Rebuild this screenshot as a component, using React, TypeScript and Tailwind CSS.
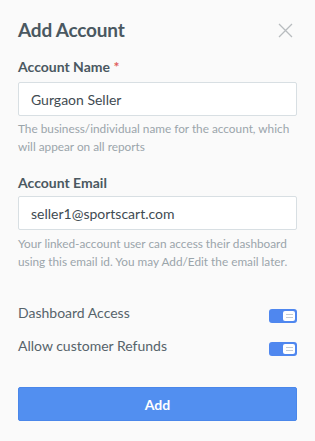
import React from "react";

function Toggle() {
  return (
    <div className="w-[28px] h-[14px] rounded-[3px] bg-[#4f87ef] flex items-center justify-end pr-[2px]">
      <div className="w-[12px] h-[10px] rounded-[2px] bg-white flex flex-col items-center justify-center gap-[2px]">
        <div className="w-[7px] h-px bg-[#c5ccd3]" />
        <div className="w-[7px] h-px bg-[#c5ccd3]" />
      </div>
    </div>
  );
}

export default function App() {
  return (
    <div className="w-[315px] h-[441px] bg-[#fafafa] px-[18px] pt-[16px] text-[#4a5861]" style={{ fontFamily: "Lato, 'Open Sans', sans-serif" }}>
      <div className="flex items-center justify-between h-[26px]">
        <h1 className="text-[19px] font-bold leading-none tracking-[-0.2px]">Add Account</h1>
        <svg width="15" height="15" viewBox="0 0 15 15" className="mr-[4px] mt-[2px]">
          <path d="M1 1L14 14M14 1L1 14" stroke="#b8bcbf" strokeWidth="1.3" />
        </svg>
      </div>

      <div className="mt-[16px] text-[14px] font-bold leading-[17px]">
        Account Name <span className="text-[#e05c5c]">*</span>
      </div>
      <div className="mt-[7px] h-[34px] bg-white border border-[#d8dfe3] rounded-[2px] flex items-center px-[12px] text-[14px] text-[#3f4b52]">
        Gurgaon Seller
      </div>
      <p className="mt-[4px] text-[11.8px] leading-[18px] text-[#9aa5ab]">
        The business/individual name for the account, which will appear on all reports
      </p>

      <div className="mt-[18px] text-[14px] font-bold leading-[17px]">Account Email</div>
      <div className="mt-[5px] h-[34px] bg-white border border-[#d8dfe3] rounded-[2px] flex items-center px-[12px] text-[14px] text-[#3f4b52]">
        seller1@sportscart.com
      </div>
      <p className="mt-[5px] text-[11.8px] leading-[18px] text-[#9aa5ab]">
        Your linked-account user can access their dashboard using this email id. You may Add/Edit the email later.
      </p>

      <div className="mt-[33px] h-[17px] flex items-start justify-between text-[14px] text-[#56636a] leading-[17px]">
        <span>Dashboard Access</span>
        <div className="mt-[5px]"><Toggle /></div>
      </div>
      <div className="mt-[16px] h-[17px] flex items-start justify-between text-[14px] text-[#56636a] leading-[17px]">
        <span>Allow customer Refunds</span>
        <div className="mt-[5px]"><Toggle /></div>
      </div>

      <button className="mt-[33px] w-full h-[34px] rounded-[2px] bg-[#528ff0] border border-[#4a87ea] text-white text-[14px] font-bold">
        Add
      </button>
    </div>
  );
}
